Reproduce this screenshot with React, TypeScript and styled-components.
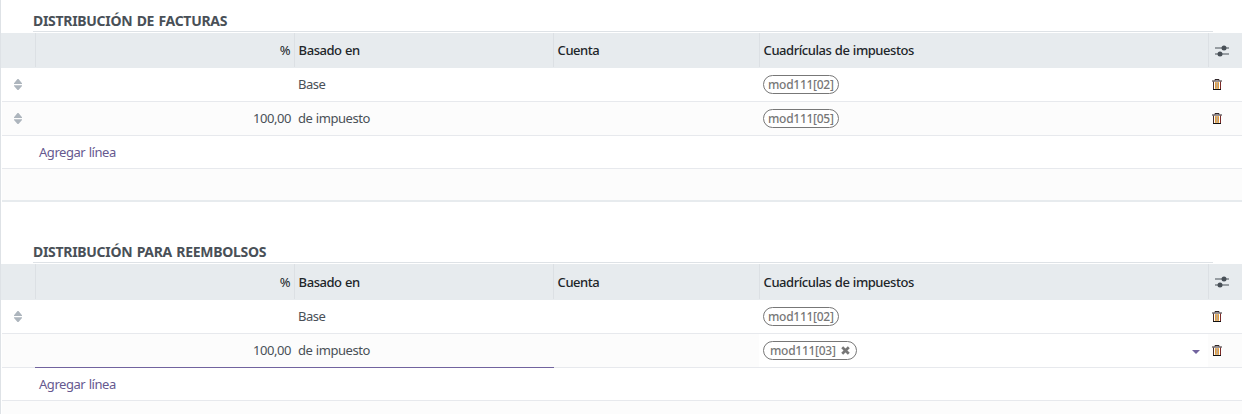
import React from 'react';
import styled, { createGlobalStyle, css } from 'styled-components';

const GlobalStyle = createGlobalStyle`
  *, *::before, *::after { box-sizing: border-box; }
  body { margin: 0; background: #fff; overflow: hidden; }
`;

const Page = styled.main`
  width: 1242px;
  height: 414px;
  overflow: hidden;
  border-left: 1px solid #dee2e6;
  padding-left: 1px;
  background: #fff;
  color: #495057;
  font-family: 'Noto Sans', 'Open Sans', sans-serif;
  font-size: 13px;
  line-height: 18px;
  letter-spacing: -0.45px;
  word-spacing: 0.5px;
`;

const Section = styled.section<{ $top: number }>`
  padding-top: ${(p) => p.$top}px;
`;

const Title = styled.h2`
  width: 1180px;
  height: 21px;
  margin: 0 0 1px 31px;
  border-bottom: 1px solid #dee2e6;
  font-size: 14px;
  font-weight: 700;
  line-height: 20px;
  letter-spacing: -0.3px;
  word-spacing: 1px;
  white-space: nowrap;
`;

const columns = css`
  display: grid;
  grid-template-columns: 33px 259px 259px 206px 449px 34px;
`;

const HeaderRow = styled.div<{ $height: number }>`
  ${columns}
  height: ${(p) => p.$height}px;
  margin-left: -1px;
  padding-left: 1px;
  padding-bottom: 1px;
  background: #e7ebee;
  color: #212529;
`;

const HeaderCell = styled.div<{ $light?: boolean; $right?: boolean; $first?: boolean }>`
  display: flex;
  align-items: center;
  justify-content: ${(p) => (p.$right ? 'flex-end' : 'flex-start')};
  padding: 0 4px 0 3.6px;
  border-left: ${(p) => (p.$first ? '0' : '1px solid #dce0e4')};
  font-weight: ${(p) => (p.$light ? 400 : 500)};
  white-space: nowrap;
`;

const Row = styled.div<{ $striped?: boolean; $height?: number }>`
  ${columns}
  height: ${(p) => p.$height ?? 34}px;
  border-bottom: 1px solid #e7e9ed;
  background: ${(p) => (p.$striped ? '#fcfcfc' : '#fff')};
`;

const Cell = styled.div<{ $right?: boolean; $focused?: boolean; $editing?: boolean }>`
  display: flex;
  align-items: center;
  justify-content: ${(p) => (p.$right ? 'flex-end' : 'flex-start')};
  padding: 0 3px 1px 4px;
  white-space: nowrap;
  ${(p) => p.$editing && 'background: #fff;'}
  ${(p) => p.$focused && 'margin-bottom: -1px; border-bottom: 1px solid #71639e;'}
`;

const BasisCell = styled(Cell)`
  ${(p) => p.$focused && 'margin-right: -1px;'}
`;

const HandleCell = styled(Cell)`
  justify-content: flex-start;
  padding: 0 0 0 12px;
`;

const TagCell = styled(Cell)`
  padding-bottom: 0;
`;

const AddLink = styled.a`
  grid-column: 2 / -1;
  align-self: center;
  padding-left: 4px;
  color: #66598f;
`;

const EmptyRow = styled.div`
  height: 33px;
  border-bottom: 2px solid #e7ebee;
  background: #fcfcfc;
`;

const Tag = styled.span<{ $removable?: boolean }>`
  display: inline-flex;
  align-items: center;
  gap: 5px;
  height: 19px;
  width: ${(p) => (p.$removable ? 94 : 76)}px;
  padding-left: ${(p) => (p.$removable ? 6 : 4)}px;
  border: 1px solid #777;
  border-radius: 10px;
  background: #fff;
  color: #777;
  font-size: 12px;
  font-weight: 500;
  line-height: 17px;
  letter-spacing: -0.28px;
`;

const Caret = styled.svg`
  margin: 3px 5px 0 auto;
`;

const IconSlot = styled.span`
  display: flex;
  margin: 1px 0 0 2px;
`;

const SortHandle = () => (
  <svg width="8" height="11" viewBox="0 0 8 11" fill="#adb5bd">
    <path d="M0 4.2V5h8v-.8L4.5 0h-1zM0 6.2h8V7l-3.5 4h-1L0 7z" />
  </svg>
);

const Sliders = () => (
  <svg width="14" height="12" viewBox="0 0 14 12" fill="#495057">
    <path d="M0 2.4h14v1.2H0zM0 8.4h14v1.2H0z" />
    <circle cx="9" cy="3" r="2.5" />
    <circle cx="5" cy="9" r="2.5" />
  </svg>
);

const Trash = () => (
  <svg width="10" height="11" viewBox="0 0 10 11" fill="none">
    <path d="M3 3h4v7H3z" fill="#f3bd74" />
    <path d="M1.5 2.5v8" stroke="#4a2a22" />
    <path d="M8.5 2.5v8" stroke="#7a2a28" />
    <path d="M1 10.5h8" stroke="#111" />
    <path d="M0 2h10M3 1.5V.5h4v1" stroke="#30272a" />
    <path d="M3.5 3.5v6M6.5 3.5v6" stroke="#e59a38" />
    <path d="M5 3.5v6" stroke="#8d949c" />
  </svg>
);

const Cross = () => (
  <svg width="9" height="9" viewBox="0 0 9 9" stroke="#777" strokeWidth="2.7">
    <path d="m1.2 1.2 6.6 6.6M7.8 1.2 1.2 7.8" />
  </svg>
);

const TableHeader = ({ height }: { height: number }) => (
  <HeaderRow $height={height}>
    <HeaderCell $first />
    <HeaderCell $light $right>%</HeaderCell>
    <HeaderCell>Basado en</HeaderCell>
    <HeaderCell>Cuenta</HeaderCell>
    <HeaderCell>Cuadrículas de impuestos</HeaderCell>
    <HeaderCell>
      <IconSlot><Sliders /></IconSlot>
    </HeaderCell>
  </HeaderRow>
);

interface LineProps {
  percent?: string;
  basis: string;
  tag: string;
  striped?: boolean;
  editing?: boolean;
}

const Line = ({ percent, basis, tag, striped, editing }: LineProps) => (
  <Row $striped={striped}>
    <HandleCell>{!editing && <SortHandle />}</HandleCell>
    <Cell $right $focused={editing}>{percent}</Cell>
    <BasisCell $focused={editing}>{basis}</BasisCell>
    <Cell />
    <TagCell $editing={editing}>
      <Tag $removable={editing}>
        {tag}
        {editing && <Cross />}
      </Tag>
      {editing && (
        <Caret width="8" height="4" viewBox="0 0 8 4" fill="#71639e">
          <path d="M0 0h8L4 4z" />
        </Caret>
      )}
    </TagCell>
    <Cell><Trash /></Cell>
  </Row>
);

const AddLine = () => (
  <Row $height={33}>
    <AddLink>Agregar línea</AddLink>
  </Row>
);

export default function App() {
  return (
    <>
      <GlobalStyle />
      <Page>
        <Section $top={11}>
          <Title>DISTRIBUCIÓN DE FACTURAS</Title>
          <TableHeader height={35} />
          <Line basis="Base" tag="mod111[02]" />
          <Line percent="100,00" basis="de impuesto" tag="mod111[05]" striped />
          <AddLine />
          <EmptyRow />
        </Section>
        <Section $top={40}>
          <Title>DISTRIBUCIÓN PARA REEMBOLSOS</Title>
          <TableHeader height={36} />
          <Line basis="Base" tag="mod111[02]" />
          <Line percent="100,00" basis="de impuesto" tag="mod111[03]" striped editing />
          <AddLine />
          <EmptyRow />
        </Section>
      </Page>
    </>
  );
}
